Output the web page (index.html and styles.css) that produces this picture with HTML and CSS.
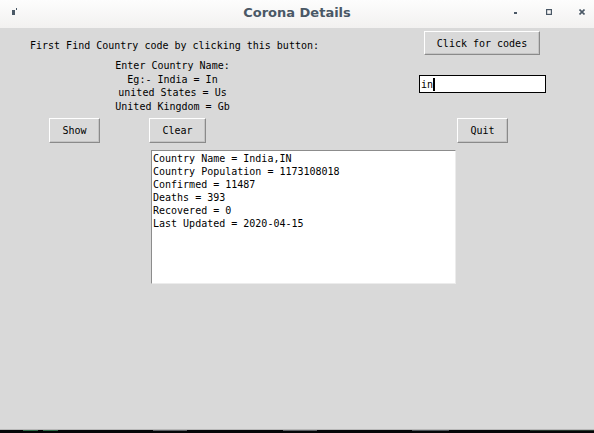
FILE: index.html
```html
<!DOCTYPE html>
<html>
<head>
<meta charset="utf-8">
<link rel="stylesheet" href="styles.css">
</head>
<body>
<div class="window">
  <div class="titlebar">
    <div class="tb-left">
      <svg class="appicon" width="6" height="8" viewBox="0 0 6 8"><rect x="0" y="2" width="3" height="5" fill="#4a5866"/><rect x="4" y="0" width="1" height="2" fill="#4a5866"/></svg>
    </div>
    <div class="title">Corona Details</div>
    <div class="controls">
      <svg class="ctl" width="6" height="6" viewBox="0 0 6 6"><rect x="1" y="3" width="3" height="2" fill="#4a5866"/></svg>
      <svg class="ctl" width="6" height="6" viewBox="0 0 6 6"><rect x="0.5" y="0.5" width="5" height="5" fill="none" stroke="#4a5866" stroke-width="1.4"/></svg>
      <svg class="ctl" width="6" height="6" viewBox="0 0 6 6"><path d="M0.5 0.5 L5.5 5.5 M5.5 0.5 L0.5 5.5" stroke="#4a5866" stroke-width="1.6"/></svg>
    </div>
  </div>
  <div class="content">
    <div class="row row1">
      <div class="lbl-first">First Find Country code by clicking this button:</div>
      <div class="btn btn-codes">Click for codes</div>
    </div>
    <div class="row row2">
      <div class="lbl-enter">Enter Country Name:<br>Eg:- India = In<br>united States = Us<br>United Kingdom = Gb</div>
      <div class="entry"><span>in</span><span class="cursor"></span></div>
    </div>
    <div class="row row3">
      <div class="btn btn-show">Show</div>
      <div class="btn btn-clear">Clear</div>
      <div class="btn btn-quit">Quit</div>
    </div>
    <div class="row row4">
      <div class="textbox">Country Name = India,IN<br>Country Population = 1173108018<br>Confirmed = 11487<br>Deaths = 393<br>Recovered = 0<br>Last Updated = 2020-04-15</div>
    </div>
  </div>
  <div class="taskbar">
    <div class="seg seg-g1"></div>
    <div class="seg seg-g2"></div>
    <div class="seg seg-a"></div>
    <div class="seg seg-b"></div>
    <div class="seg seg-c"></div>
    <div class="seg seg-d"></div>
  </div>
</div>
</body>
</html>
```

FILE: styles.css
```css
* { box-sizing: border-box; }
html, body { margin: 0; padding: 0; }
body { width: 594px; height: 433px; overflow: hidden; background: #d9d9d9; }

.window { width: 594px; height: 433px; display: flex; flex-direction: column; }

.titlebar {
  height: 28px;
  flex: none;
  display: grid;
  grid-template-columns: 1fr auto 1fr;
  align-items: center;
  background: linear-gradient(#fdfdfd, #f2f1f0);
}
.tb-left { display: flex; }
.appicon { margin-left: 12px; margin-top: -5px; display: block; }
.title {
  text-align: center;
  font-family: "DejaVu Sans", sans-serif;
  font-weight: bold;
  font-size: 13px;
  color: #4a5866;
  margin-top: -4px;
}
.controls { display: flex; justify-content: flex-end; gap: 27px; margin-right: 9px; margin-top: -4px; }
.ctl { display: block; }

.content {
  flex: 1;
  background: #d9d9d9;
  font-family: "DejaVu Sans Mono", monospace;
  font-size: 10px;
  line-height: 13px;
  color: #000;
}
.row { display: flex; align-items: flex-start; }

.btn {
  height: 25px;
  display: flex;
  align-items: center;
  justify-content: center;
  background: #d9d9d9;
  border: 1px solid;
  border-color: #ffffff #8a8a8a #8a8a8a #ffffff;
  box-shadow: inset -1px -1px 0 #c4c4c4;
}

.row1 { margin-top: 3px; height: 24px; }
.lbl-first { width: 424px; padding-left: 30px; margin-top: 8px; white-space: nowrap; }
.btn-codes { width: 116px; height: 24px; }

.row2 { height: 63px; }
.lbl-enter { width: 201px; margin-left: 72px; margin-top: 4px; text-align: center; line-height: 13.6px; white-space: nowrap; }
.entry {
  margin-left: 146px;
  margin-top: 20px;
  width: 127px;
  height: 18px;
  border: 1px solid #000;
  background: #fff;
  display: flex;
  align-items: center;
  padding-left: 1px;
}
.cursor { width: 2px; height: 13px; background: #000; margin-left: 0; }

.row3 { height: 25px; }
.btn-show { margin-left: 49px; width: 51px; }
.btn-clear { margin-left: 49px; width: 57px; }
.btn-quit { margin-left: 251px; width: 51px; }

.row4 { margin-top: 7px; }
.textbox {
  margin-left: 151px;
  width: 305px;
  height: 134px;
  background: #fff;
  border: 1px solid;
  border-color: #8c8c8c #ececec #ececec #8c8c8c;
  padding: 1px 1px;
  white-space: nowrap;
}

.taskbar {
  height: 4px;
  flex: none;
  background: #050608;
  border-top: 1px solid #b8b8b8;
  position: relative;
}
.seg { position: absolute; top: 0; height: 1px; }
.seg-g1 { left: 23px; width: 15px; background: #2f6b47; }
.seg-g2 { left: 43px; width: 15px; background: #2f6b47; }
.seg-a { left: 153px; width: 34px; background: #5c5f63; }
.seg-b { left: 283px; width: 34px; background: #5c5f63; }
.seg-c { left: 412px; width: 37px; background: #4f5559; }
.seg-d { left: 530px; width: 64px; background: #2a3a30; }
```
